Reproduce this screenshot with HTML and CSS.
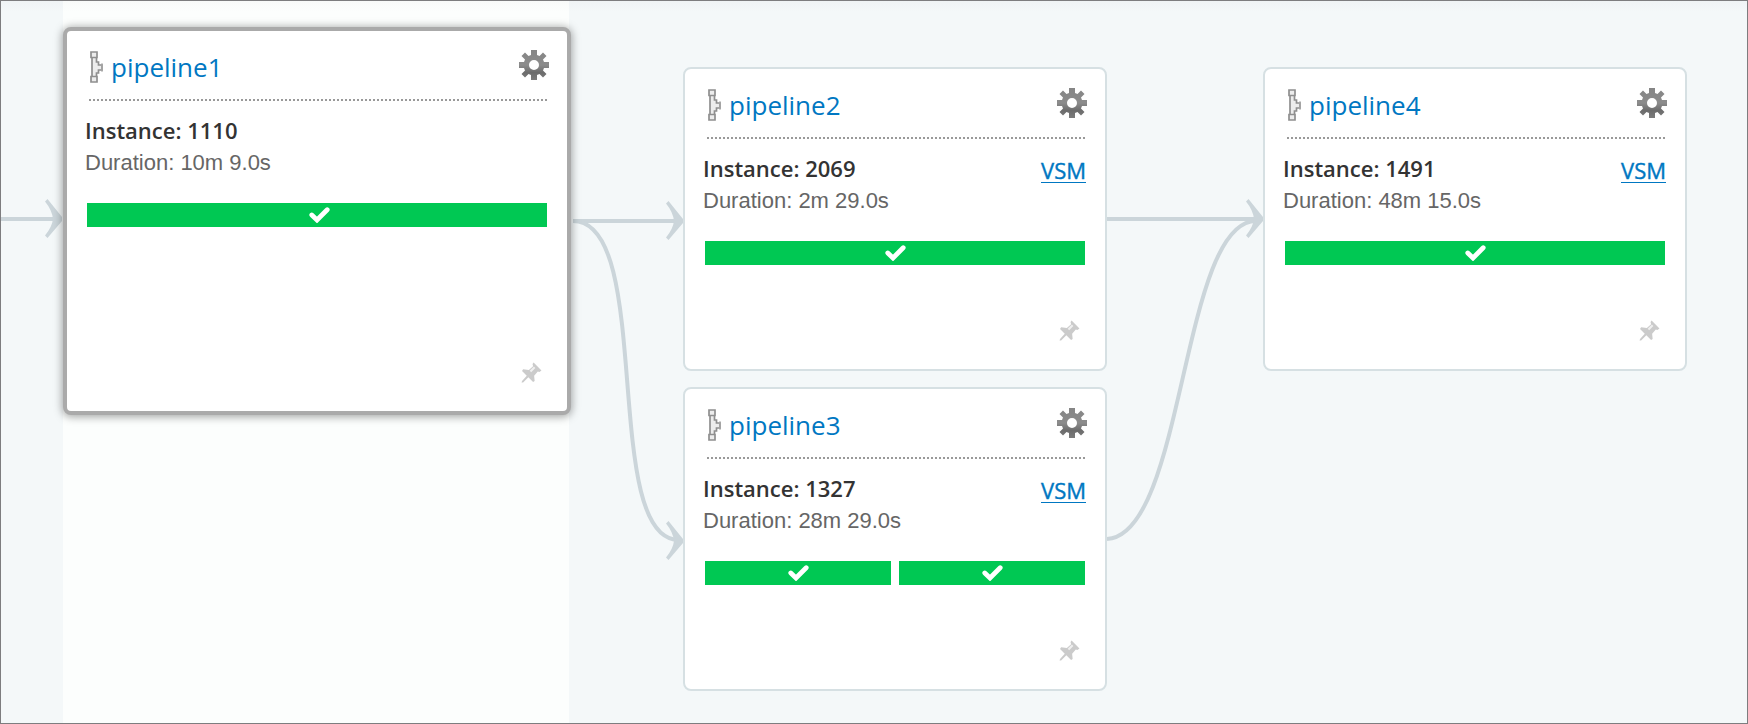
FILE: index.html
```
<!DOCTYPE html>
<html lang="en">
<head>
<meta charset="utf-8">
<title>Value Stream Map</title>
<link rel="stylesheet" href="styles.css">
</head>
<body>
<svg class="defs" width="0" height="0">
  <defs>
    <linearGradient id="steel" x1="0" y1="0" x2="0" y2="1">
      <stop offset="0" stop-color="#858585"/><stop offset=".5" stop-color="#8c8c8c"/><stop offset=".75" stop-color="#6c6c6c"/><stop offset="1" stop-color="#7c7c7c"/>
    </linearGradient>
    <symbol id="pipe" viewBox="0 0 14 32">
      <path d="M1 1H7V6.500H1ZM1 25.500H7V31H1ZM2 6.500H6.500V11H8.500V14H12V19H8.500V22H6.500V25.500H2Z" fill="#ececec" stroke="#8f8f8f" stroke-width="1.700"/>
      <path d="M12 12.500V20.500" stroke="#a5a5a5" stroke-width="1.800"/>
    </symbol>
    <symbol id="gear" viewBox="-15 -15 30 30">
      <path fill="url(#steel)" fill-rule="evenodd" d="M-3-15H3V-10L5.500-9L9-12.500L12.500-9L9-5.500L10-3H15V3H10L9 5.500L12.500 9L9 12.500L5.500 9L3 10V15H-3V10L-5.500 9L-9 12.500L-12.500 9L-9 5.500L-10 3H-15V-3H-10L-9-5.500L-12.500-9L-9-12.500L-5.500-9L-3-10ZM0-5A5 5 0 1 0 0 5A5 5 0 1 0 0-5Z"/>
    </symbol>
    <symbol id="pin" viewBox="0 0 20 20">
      <path d="M12 .5L19.500 8L17.500 9.500L16 9L12.500 13L13 18L11.500 19L7 14.500L2 19.500L.5 19.500L1 18L5.500 13L1 8.500L2 7L7.500 7.500L11.500 4L11 2Z" fill="#cbcbcb"/>
      <path d="M13 5L9 9" stroke="#f0f0f0" stroke-width="2"/>
    </symbol>
    <symbol id="check" viewBox="0 0 21 16">
      <path d="M2.800 8L8 13L18.200 2.800" fill="none" stroke="#fff" stroke-width="4.800" stroke-linecap="round"/>
    </symbol>
    <symbol id="head" viewBox="0 0 17 40" overflow="visible">
      <path d="M2.500 0L17 18V22L2.500 39L0 36.500Q7 28 8 20Q7 11 0 2.500Z" fill="#cbd5da"/>
    </symbol>
  </defs>
</svg>
<main class="map">
  <div class="highlight"></div>
  <svg class="links" width="1748" height="724" viewBox="0 0 1748 724">
    <g fill="none" stroke="#cbd5da" stroke-width="4">
      <path d="M0 219H58M573 221H678M1107 219H1258"/>
      <path d="M573 221C655 221 600 540 679 540"/>
      <path d="M1107 539C1185 535 1181 221 1256 221"/>
    </g>
    <use href="#head" x="45" y="199" width="17" height="40"/>
    <use href="#head" x="666" y="201" width="17" height="40"/>
    <use href="#head" x="666" y="521" width="17" height="40"/>
    <use href="#head" x="1246" y="199" width="17" height="40"/>
  </svg>

  <section class="card current p1">
    <header class="head"><svg class="pipe"><use href="#pipe"/></svg><h3 class="name">pipeline1</h3><svg class="gear"><use href="#gear"/></svg></header>
    <div class="rule"></div>
    <div class="info"><span class="instance">Instance: 1110</span></div>
    <div class="duration">Duration: 10m 9.0s</div>
    <div class="stages"><span class="stage"><svg class="check"><use href="#check"/></svg></span></div>
    <svg class="pin"><use href="#pin"/></svg>
  </section>

  <section class="card p2">
    <header class="head"><svg class="pipe"><use href="#pipe"/></svg><h3 class="name">pipeline2</h3><svg class="gear"><use href="#gear"/></svg></header>
    <div class="rule"></div>
    <div class="info"><span class="instance">Instance: 2069</span><a class="vsm">VSM</a></div>
    <div class="duration">Duration: 2m 29.0s</div>
    <div class="stages"><span class="stage"><svg class="check"><use href="#check"/></svg></span></div>
    <svg class="pin"><use href="#pin"/></svg>
  </section>

  <section class="card p3">
    <header class="head"><svg class="pipe"><use href="#pipe"/></svg><h3 class="name">pipeline3</h3><svg class="gear"><use href="#gear"/></svg></header>
    <div class="rule"></div>
    <div class="info"><span class="instance">Instance: 1327</span><a class="vsm">VSM</a></div>
    <div class="duration">Duration: 28m 29.0s</div>
    <div class="stages"><span class="stage"><svg class="check"><use href="#check"/></svg></span><span class="stage"><svg class="check"><use href="#check"/></svg></span></div>
    <svg class="pin"><use href="#pin"/></svg>
  </section>

  <section class="card p4">
    <header class="head"><svg class="pipe"><use href="#pipe"/></svg><h3 class="name">pipeline4</h3><svg class="gear"><use href="#gear"/></svg></header>
    <div class="rule"></div>
    <div class="info"><span class="instance">Instance: 1491</span><a class="vsm">VSM</a></div>
    <div class="duration">Duration: 48m 15.0s</div>
    <div class="stages"><span class="stage"><svg class="check"><use href="#check"/></svg></span></div>
    <svg class="pin"><use href="#pin"/></svg>
  </section>
</main>
</body>
</html>
```
FILE: styles.css
```
* { box-sizing: border-box; }
body { margin: 0; font-family: "Open Sans", "Noto Sans", sans-serif; }
svg { display: block; flex: none; }
.defs { position: absolute; }
.map {
  position: relative;
  width: 1748px;
  height: 724px;
  overflow: hidden;
  background: linear-gradient(#eff3f5, #f4f8f9 12px);
}
.map::after { content: ""; position: absolute; inset: 0; border: 1px solid #7d7d7f; }
.highlight { position: absolute; left: 63px; top: 0; width: 506px; height: 724px; background: linear-gradient(#f8faf9, #fcfefd 12px); }
.links { position: absolute; left: 0; top: 0; }
/* graph nodes, placed on the canvas */
.card {
  position: absolute;
  display: flex;
  flex-direction: column;
  width: 424px;
  height: 304px;
  padding: 19px 20px 28px;
  border: 2px solid #d6e0e3;
  border-radius: 8px;
  background: #fff;
}
.card.current { width: 508px; height: 388px; border: 4px solid #aaa; box-shadow: 0 1px 8px 1px rgba(0, 0, 0, .35); }
.p1 { left: 63px; top: 27px; }
.p2 { left: 683px; top: 67px; }
.p3 { left: 683px; top: 387px; }
.p4 { left: 1263px; top: 67px; }
.head { display: flex; align-items: flex-start; height: 49px; margin-right: -2px; padding-left: 3px; }
.pipe { width: 14px; height: 32px; margin-top: 1px; }
.name { flex: 1; margin: 0 0 0 7px; color: #0077c2; font-size: 26px; font-weight: 400; line-height: 34px; }
.gear { width: 30px; height: 30px; }
.rule { height: 2px; margin-left: 2px; background: repeating-linear-gradient(90deg, #999 0 2px, transparent 2px 4px); }
.info { display: flex; justify-content: space-between; height: 32px; margin: 13px 0 0 -2px; font-size: 22px; line-height: 32px; }
.instance { color: #333; font-weight: 600; }
.vsm { height: 28px; margin: 3px -1px 0 0; line-height: 31px; color: #0077c2; -webkit-text-stroke: .4px #0077c2; border-bottom: 1px solid #0077c2; }
.duration { margin: 2px 0 0 -2px; color: #666; font: 22px/30px "Liberation Sans", Arial, sans-serif; }
.stages { display: flex; gap: 8px; margin-top: 25px; }
.stage { display: flex; flex: 1; justify-content: center; height: 24px; padding-top: 4px; background: #00c853; }
.current .stage { padding-left: 4px; }
.check { width: 21px; height: 16px; }
.pin { width: 21px; height: 21px; margin: auto 5px 0 auto; }
```
